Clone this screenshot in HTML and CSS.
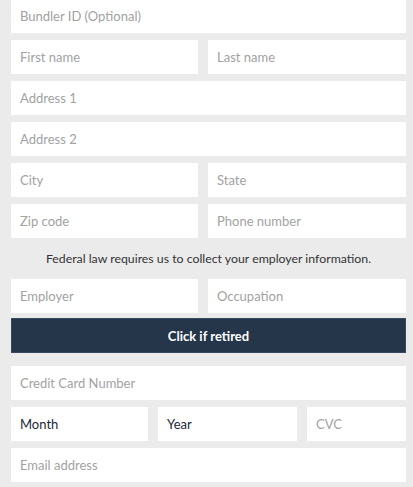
FILE: index.html
```html
<!DOCTYPE html>
<html lang="en">

<head>
    <meta charset="UTF-8">
    <meta name="viewport" content="width=device-width, initial-scale=1.0">
    <title>Donation form</title>
    <link rel="stylesheet" href="styles.css">
</head>

<body>
    <form class="donate-form">
        <input class="field" type="text" placeholder="Bundler ID (Optional)">

        <div class="row two">
            <input class="field" type="text" placeholder="First name">
            <input class="field" type="text" placeholder="Last name">
        </div>

        <input class="field" type="text" placeholder="Address 1">
        <input class="field" type="text" placeholder="Address 2">

        <div class="row two">
            <input class="field" type="text" placeholder="City">
            <input class="field" type="text" placeholder="State">
        </div>

        <div class="row two">
            <input class="field" type="text" placeholder="Zip code">
            <input class="field" type="text" placeholder="Phone number">
        </div>

        <p class="notice">Federal law requires us to collect your employer information.</p>

        <div class="row two">
            <input class="field" type="text" placeholder="Employer">
            <input class="field" type="text" placeholder="Occupation">
        </div>

        <button type="button" class="retired-btn">Click if retired</button>

        <input class="field" type="text" placeholder="Credit Card Number">

        <div class="row three">
            <select class="field select">
                <option>Month</option>
            </select>
            <select class="field select">
                <option>Year</option>
            </select>
            <input class="field" type="text" placeholder="CVC">
        </div>

        <input class="field" type="email" placeholder="Email address">
    </form>
</body>

</html>
```

FILE: styles.css
```css
body {
    margin: 0;
    background-color: #ebebeb;
    font-family: Lato, 'Open Sans', sans-serif;
}

.donate-form {
    display: flex;
    flex-direction: column;
    gap: 7px;
    margin: -1px 7px 0 11px;
}

.row {
    display: grid;
    gap: 10px;
}

.row.two {
    grid-template-columns: 187px 1fr;
}

.row.three {
    grid-template-columns: 137px 139px 1fr;
}

.field {
    box-sizing: border-box;
    height: 34px;
    width: 100%;
    margin: 0;
    padding: 0 9px;
    border: none;
    background: white;
    font-family: inherit;
    font-size: 13px;
    color: #1f2d3d;
    outline: none;
}

.field::placeholder {
    color: #a2a2a2;
}

/* month / year pickers */
.select {
    appearance: none;
    -webkit-appearance: none;
    border-radius: 0;
    color: #1c2838;
}

.notice {
    margin: 0;
    height: 27px;
    line-height: 27px;
    text-align: center;
    font-size: 12.3px;
    color: #333;
}

.retired-btn {
    height: 35px;
    margin: -2px 0 6px;
    border: 1px solid #3a4a5e;
    background-color: #26364a;
    color: white;
    font-family: inherit;
    font-size: 13px;
    font-weight: bold;
    cursor: pointer;
}
```
